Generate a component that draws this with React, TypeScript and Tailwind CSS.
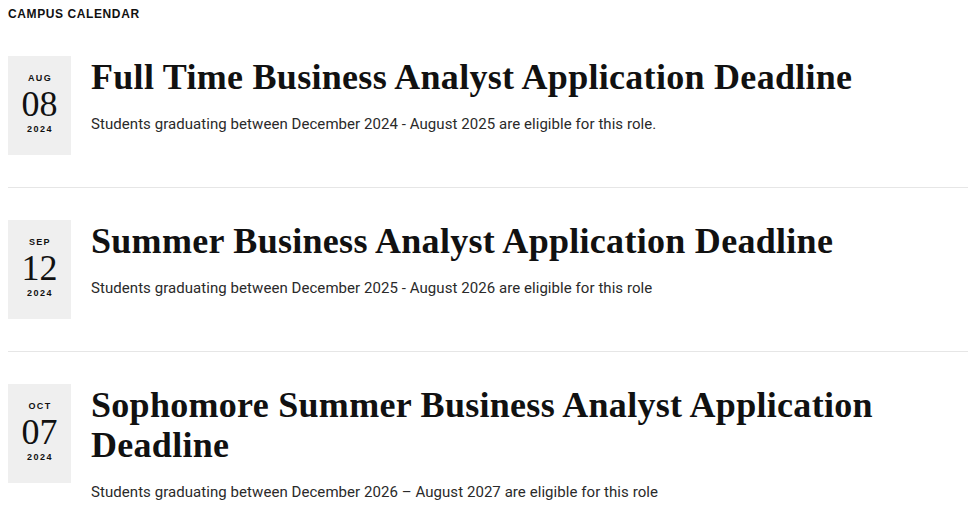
import React from 'react';

const events = [
  {
    month: 'AUG',
    day: '08',
    year: '2024',
    title: 'Full Time Business Analyst Application Deadline',
    desc: 'Students graduating between December 2024 - August 2025 are eligible for this role.',
  },
  {
    month: 'SEP',
    day: '12',
    year: '2024',
    title: 'Summer Business Analyst Application Deadline',
    desc: 'Students graduating between December 2025 - August 2026 are eligible for this role',
  },
  {
    month: 'OCT',
    day: '07',
    year: '2024',
    title: 'Sophomore Summer Business Analyst Application Deadline',
    desc: 'Students graduating between December 2026 \u2013 August 2027 are eligible for this role',
  },
];

export default function App() {
  return (
    <div className="bg-white min-h-screen pl-2 text-[#111] font-['Roboto',sans-serif]">
      <h2 className="pt-[6px] font-['Liberation_Sans',sans-serif] text-[12px] leading-[16px] tracking-[0.05em] font-semibold uppercase">
        Campus Calendar
      </h2>
      <div className="mt-[2px]">
        {events.map((e, i) => (
          <div
            key={i}
            className={`flex items-start gap-5 py-8 ${i < events.length - 1 ? 'border-b border-[#e6e6e6]' : ''}`}
          >
            <div className="w-[63px] h-[99px] shrink-0 bg-[#efefef] flex flex-col items-center justify-center pb-[3px]">
              <span className="font-['Liberation_Sans',sans-serif] text-[9px] leading-[9px] font-bold tracking-[0.14em] pl-[1px]">
                {e.month}
              </span>
              <span className="font-['Liberation_Serif',serif] text-[36px] leading-[42px]">{e.day}</span>
              <span className="font-['Liberation_Sans',sans-serif] text-[9px] leading-[9px] font-bold tracking-[0.16em] pl-[1px]">
                {e.year}
              </span>
            </div>
            <div className="pr-[80px]">
              <h3 className="font-['Liberation_Serif',serif] font-bold text-[36px] leading-[40px] tracking-[0.008em] mt-[1px]">
                {e.title}
              </h3>
              <p className="mt-[17px] text-[15px] leading-[20px] tracking-[0.004em] text-[#2a2a2a]">{e.desc}</p>
            </div>
          </div>
        ))}
      </div>
    </div>
  );
}
